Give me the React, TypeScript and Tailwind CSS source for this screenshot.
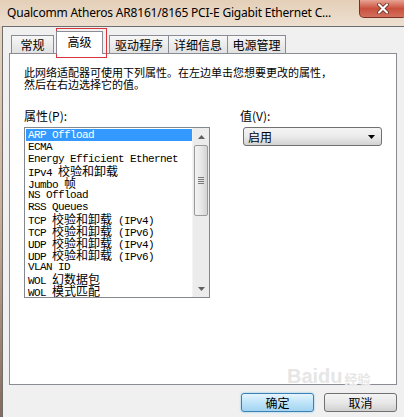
import React from "react";

const items = [
  "ARP Offload",
  "ECMA",
  "Energy Efficient Ethernet",
  "IPv4 校验和卸载",
  "Jumbo 帧",
  "NS Offload",
  "RSS Queues",
  "TCP 校验和卸载 (IPv4)",
  "TCP 校验和卸载 (IPv6)",
  "UDP 校验和卸载 (IPv4)",
  "UDP 校验和卸载 (IPv6)",
  "VLAN ID",
  "WOL 幻数据包",
  "WOL 模式匹配",
];

// split latin / CJK so the latin part keeps a 6px monospace cell
const Runs = ({ text }: { text: string }) => (
  <>
    {text
      .split(/([\u4e00-\u9fff]+)/)
      .filter(Boolean)
      .map((p, i) =>
        /[\u4e00-\u9fff]/.test(p) ? (
          <span key={i} className="font-['Noto_Sans_CJK_SC',sans-serif] text-[12px] leading-[12px] whitespace-pre">
            {p}
          </span>
        ) : (
          <span key={i} className="font-['Liberation_Mono',monospace] text-[11px] leading-[12px] tracking-[-0.6px] whitespace-pre">
            {p}
          </span>
        )
      )}
  </>
);

const Tab = ({ label, w, cls = "" }: { label: string; w: string; cls?: string }) => (
  <div
    className={`${w} ${cls} h-[18px] border border-b-0 border-[#898c95] bg-gradient-to-b from-[#f7f7f7] to-[#e1e1e1] flex items-center justify-center text-[12px] leading-[12px] text-black`}
  >
    {label}
  </div>
);

export default function App() {
  return (
    <div className="relative w-[404px] h-[417px] overflow-hidden flex flex-col bg-[#e8d6c2] font-['Noto_Sans_CJK_SC',sans-serif]">
      {/* title bar */}
      <div className="h-[26px] flex items-start bg-gradient-to-b from-[#e4cfb8] to-[#eddfd0]">
        <div className="pl-[7px] pt-[5px] font-['Noto_Sans',sans-serif] text-[12px] tracking-[-0.2px] leading-[15px] text-black whitespace-nowrap">
          Qualcomm Atheros AR8161/8165 PCI-E Gigabit Ethernet C...
        </div>
        <div className="ml-auto mr-[-3px] w-[48px] h-[18px] rounded-b-[5px] border border-t-0 border-[#7a2f25] bg-gradient-to-b from-[#e8a394] via-[#c9503d] to-[#d2705c] flex items-center justify-center">
          <svg width="12" height="11" viewBox="0 0 12 11">
            <path d="M2 1.5 L10 9.5 M10 1.5 L2 9.5" stroke="#5a2018" strokeWidth="3.6" strokeLinecap="round" />
            <path d="M2 1.5 L10 9.5 M10 1.5 L2 9.5" stroke="#ffffff" strokeWidth="2.2" strokeLinecap="round" />
          </svg>
        </div>
      </div>

      <div className="flex-1 flex">
        {/* left frame */}
        <div className="w-[5px] bg-gradient-to-b from-[#e6d2bd] via-[#c8ad94] to-[#86695a]" />

        {/* client area */}
        <div className="flex-1 flex flex-col border-l border-t border-[#6e6e6e] bg-[#f0f0f0] pl-[6px] pr-[7px]">
          {/* tabs */}
          <div className="h-[26px] flex items-end pl-[2px]">
            <Tab label="常规" w="w-[43px]" />
            <div className="ml-[2px] w-[47px] h-[23px] -mb-px relative z-10 border border-b-0 border-[#898c95] bg-white flex items-start justify-center pt-[4px] text-[12px] leading-[12px] text-black">
              高级
            </div>
            <Tab label="驱动程序" w="w-[60px]" cls="ml-[6px]" />
            <Tab label="详细信息" w="w-[60px]" cls="-ml-px" />
            <Tab label="电源管理" w="w-[59px]" cls="-ml-px" />
          </div>

          {/* tab panel */}
          <div className="h-[332px] border border-[#898c95] bg-white px-[14px] pt-[12px] leading-[12px] text-black">
            <div className="whitespace-nowrap text-[11px]">此网络适配器可使用下列属性。在左边单击您想要更改的属性，</div>
            <div className="text-[11px]">然后在右边选择它的值。</div>

            <div className="mt-[20px] flex text-[12px]">
              <div className="w-[186px]">
                <div className="h-[12px]">属性(P):</div>
                <div className="mt-[5px] h-[171px] border border-[#828790] bg-white flex">
                  <div className="flex-1 pt-[1px] pl-[1px]">
                    {items.map((it, i) => (
                      <div
                        key={it}
                        className={`h-[12px] flex items-baseline pl-[2px] ${
                          i === 0 ? "bg-[#3399ff] text-white" : "text-black"
                        }`}
                      >
                        <Runs text={it} />
                      </div>
                    ))}
                  </div>
                  {/* scrollbar */}
                  <div className="w-[17px] bg-[#ececec] border-l border-[#f4f4f4] flex flex-col items-center">
                    <div className="h-[17px] flex items-center justify-center">
                      <svg width="7" height="4" viewBox="0 0 7 4">
                        <path d="M0 4 L3.5 0 L7 4 Z" fill="#606060" />
                      </svg>
                    </div>
                    <div className="w-[14px] h-[71px] rounded-[2px] border border-[#9a9a9a] bg-gradient-to-r from-[#f3f3f3] via-[#e8e8e8] to-[#d4d4d4] flex flex-col items-center justify-center gap-[1px]">
                      <div className="w-[6px] h-px bg-[#7a7a7a]" />
                      <div className="w-[6px] h-px bg-[#7a7a7a]" />
                      <div className="w-[6px] h-px bg-[#7a7a7a]" />
                      <div className="w-[6px] h-px bg-[#7a7a7a]" />
                    </div>
                    <div className="flex-1" />
                    <div className="h-[17px] flex items-center justify-center">
                      <svg width="7" height="4" viewBox="0 0 7 4">
                        <path d="M0 0 L3.5 4 L7 0 Z" fill="#606060" />
                      </svg>
                    </div>
                  </div>
                </div>
              </div>

              <div className="ml-[30px]">
                <div className="h-[12px]">值(V):</div>
                <div className="mt-[5px] ml-[3px] w-[139px] h-[19px] rounded-[3px] border border-[#707070] bg-gradient-to-b from-[#f4f4f4] via-[#ebebeb] to-[#d2d2d2] flex items-center pl-[4px] pr-[6px]">
                  <span>启用</span>
                  <svg className="ml-auto" width="7" height="4" viewBox="0 0 7 4">
                    <path d="M0 0 L3.5 4 L7 0 Z" fill="#000" />
                  </svg>
                </div>
              </div>
            </div>
          </div>

          {/* buttons */}
          <div className="mt-[8px] flex justify-end gap-[10px] text-[12px] leading-[12px] text-black">
            <div className="w-[73px] h-[19px] rounded-[3px] border border-[#3c7fb1] bg-gradient-to-b from-[#e6f5fd] via-[#bfe4f9] to-[#a2d4f1] shadow-[0_0_2px_#6cc3f0] flex items-center justify-center">
              确定
            </div>
            <div className="w-[73px] h-[19px] rounded-[3px] border border-[#707070] bg-gradient-to-b from-[#f4f4f4] via-[#e8e8e8] to-[#d0d0d0] flex items-center justify-center">
              取消
            </div>
          </div>
        </div>
      </div>

      {/* screenshot annotation + watermark */}
      <div className="absolute left-[56px] top-[28px] w-[51px] h-[30px] border border-[#d8353b]" />
      <div className="absolute left-[287px] top-[366px] flex items-end gap-[2px] text-[#e6e6e6] select-none">
        <span className="font-['Liberation_Sans',sans-serif] font-bold text-[20px] leading-[20px]">Baidu</span>
        <span className="text-[13px] leading-[14px] font-bold">经验</span>
      </div>
    </div>
  );
}
